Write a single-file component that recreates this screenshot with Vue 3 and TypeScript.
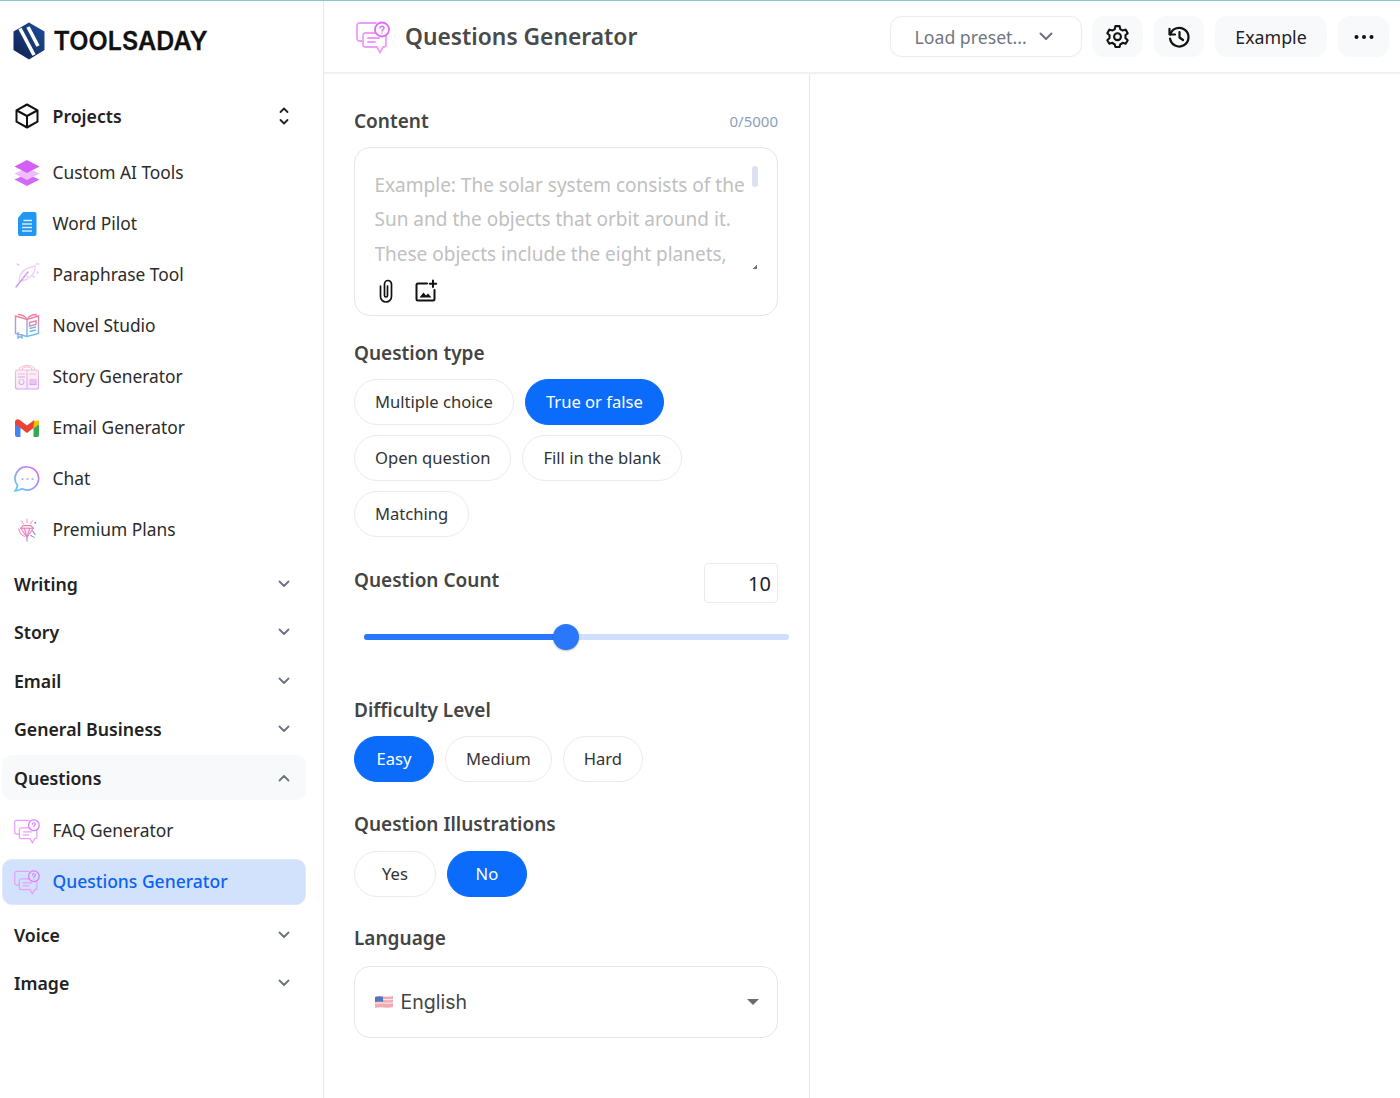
<script setup lang="ts">
const tools = [
  { label: 'Custom AI Tools', icon: 'layers' },
  { label: 'Word Pilot', icon: 'doc' },
  { label: 'Paraphrase Tool', icon: 'feather' },
  { label: 'Novel Studio', icon: 'book' },
  { label: 'Story Generator', icon: 'story' },
  { label: 'Email Generator', icon: 'gmail' },
  { label: 'Chat', icon: 'chat' },
  { label: 'Premium Plans', icon: 'gem' },
]
const sectionsA = ['Writing', 'Story', 'Email', 'General Business']
const sectionsB = ['Voice', 'Image']
const typeRows = [
  [{ t: 'Multiple choice', on: false }, { t: 'True or false', on: true }],
  [{ t: 'Open question', on: false }, { t: 'Fill in the blank', on: false }],
  [{ t: 'Matching', on: false }],
]
const difficulty = [{ t: 'Easy', on: true }, { t: 'Medium', on: false }, { t: 'Hard', on: false }]
const illustrations = [{ t: 'Yes', on: false }, { t: 'No', on: true }]
const subItems = [
  { label: 'FAQ Generator', active: false },
  { label: 'Questions Generator', active: true },
]
</script>

<template>
  <div class="page">
    <div class="topline"></div>
    <div class="shell">
      <aside class="sidebar">
        <div class="brand">
          <svg class="logo" viewBox="0 0 32 38" width="32" height="38">
            <defs>
              <linearGradient id="lg" x1="0" y1="1" x2="1" y2="0">
                <stop offset="0" stop-color="#10204c" />
                <stop offset="1" stop-color="#1d4f9e" />
              </linearGradient>
            </defs>
            <path d="M16 0.5 31.5 9.5V28L16 37.5.5 28V9.500Z" fill="url(#lg)" />
            <path d="M7 6.500 21 33" stroke="#fff" stroke-width="3.600" fill="none" />
            <path d="M15 5 25 24" stroke="#fff" stroke-width="3.600" fill="none" />
          </svg>
          <span class="brand-name">TOOLSADAY</span>
        </div>

        <div class="row projects">
          <svg class="ico" viewBox="0 0 26 26" width="26" height="26" fill="none" stroke="#111" stroke-width="2" stroke-linejoin="round">
            <path d="M13 1.500 23.500 7.300V18.700L13 24.500 2.500 18.700V7.300Z" />
            <path d="M2.800 7.500 13 13 23.200 7.500M13 13V24.200" />
          </svg>
          <span class="projects-label">Projects</span>
          <svg class="updown" viewBox="0 0 12 20" width="12" height="20" fill="none" stroke="#222" stroke-width="1.800" stroke-linecap="round" stroke-linejoin="round">
            <path d="M2.500 6 6 2.500 9.500 6M2.500 14 6 17.500 9.500 14" />
          </svg>
        </div>

        <nav class="tools">
          <a v-for="tool in tools" :key="tool.label" class="row tool">
            <span class="tool-icon">
              <svg v-if="tool.icon === 'layers'" viewBox="0 0 26 26" width="26" height="26">
                <path d="M13 14 25.500 19.500 13 26 .5 19.500Z" fill="#d468f6" />
                <path d="M13 8 25.500 13.500 13 20 .5 13.500Z" fill="#efbcfc" />
                <path d="M13 0 25.500 6.500 13 13 .5 6.500Z" fill="#d45ef6" />
              </svg>
              <svg v-else-if="tool.icon === 'doc'" viewBox="0 0 20 24" width="20" height="24">
                <path d="M6 0H17.500A2 2 0 0 1 19.500 2V22A2 2 0 0 1 17.500 24H3A2 2 0 0 1 1 22V6Z" fill="#2196f3" />
                <path d="M6.500 8.500H15M5 12H15M5 15.500H15M5 19H15" stroke="#d6edff" stroke-width="1.500" />
              </svg>
              <svg v-else-if="tool.icon === 'feather'" viewBox="0 0 26 26" width="26" height="26" fill="none" stroke-linecap="round">
                <path d="M5 19C5 11 11 6 21 4 22 11 15 18 7 19" stroke="#f0d0f9" stroke-width="1.300" />
                <path d="M2 25 14 10" stroke="#c39af3" stroke-width="1.400" />
                <path d="M8 15 10 18M11 12 14 15" stroke="#f5cbea" stroke-width="1.100" />
                <path d="M3 2 5 3M22 2 25 2M23 10 24 11M19 14 20 15" stroke="#e9b6ef" stroke-width="1.200" />
              </svg>
              <svg v-else-if="tool.icon === 'book'" viewBox="0 0 26 26" width="26" height="26" fill="none" stroke="url(#bookg)" stroke-width="1.400">
                <defs>
                  <linearGradient id="bookg" x1="0" y1="0" x2="0" y2="1">
                    <stop offset="0" stop-color="#f97f9f" />
                    <stop offset="1" stop-color="#5fc0f7" />
                  </linearGradient>
                </defs>
                <path d="M1.500 3V20.500L13 23.500 24.500 20.500V3L13 6.500Z" />
                <path d="M4 1.500C8 1.500 11 3 13 6.500 15 3 18 1.500 22 1.500V3M13 6.500V23.500" />
                <path d="M15.500 9.500 22 8V11.500L15.500 13ZM15.500 15.500 22 14M15.500 18.500 22 17" />
                <path d="M4 19V25L6 23.500 8 25V21" />
              </svg>
              <svg v-else-if="tool.icon === 'story'" viewBox="0 0 26 26" width="26" height="26" fill="none" stroke="url(#storyg)" stroke-width="1.100">
                <defs>
                  <linearGradient id="storyg" x1="0" y1="0" x2="0" y2="1">
                    <stop offset="0" stop-color="#f7bfcd" />
                    <stop offset="1" stop-color="#d3a6f8" />
                  </linearGradient>
                </defs>
                <path d="M1.500 8A2 2 0 0 1 3.500 6H22.500A2 2 0 0 1 24.500 8V23A2 2 0 0 1 22.500 25H3.500A2 2 0 0 1 1.500 23Z" fill="#f8edf9" />
                <path d="M13 6V25M5 6C5 0 21 0 21 6M8 6C8 2 18 2 18 6" />
                <circle cx="7.500" cy="18" r="2.500" />
                <rect x="16" y="15.500" width="6" height="5" fill="#e5c8f7" />
                <path d="M4 10H11M15 10H22M4 13H11" />
              </svg>
              <svg v-else-if="tool.icon === 'gmail'" viewBox="0 0 24 18" width="24" height="18">
                <path d="M0 3.500V16A2 2 0 0 0 2 18H5.500V8Z" fill="#4285f4" />
                <path d="M24 3.500V16A2 2 0 0 1 22 18H18.500V8Z" fill="#34a853" />
                <path d="M18.500 2 24 1.500V5.500L18.500 9.500Z" fill="#fbbc04" />
                <path d="M0 5.500V3C0 .5 2.800-.6 4.800 1L12 6.500 19.200 1 18.500 9 12 14 5.500 9Z" fill="#ea4335" />
              </svg>
              <svg v-else-if="tool.icon === 'chat'" viewBox="0 0 26 26" width="26" height="26" fill="none">
                <defs>
                  <linearGradient id="chatg" x1="0" y1="1" x2="1" y2="0">
                    <stop offset="0" stop-color="#5ccff8" />
                    <stop offset="1" stop-color="#e860f6" />
                  </linearGradient>
                </defs>
                <path d="M13.500 1A11.500 11.500 0 1 1 8 22.800C6 24 3.500 24.800 1 24.800 2.500 23 3.200 21.500 3.500 19.500A11.500 11.500 0 0 1 13.500 1Z" stroke="url(#chatg)" stroke-width="1.700" />
                <g fill="#a3b2f8"><circle cx="8.500" cy="13" r="1.100" /><circle cx="13.500" cy="13" r="1.100" /><circle cx="18.500" cy="13" r="1.100" /></g>
              </svg>
              <svg v-else viewBox="0 0 24 26" width="22" height="24" fill="none" stroke-width="1.100" stroke-linecap="round">
                <path d="M5 11 8 8H16L19 11 12 21Z" stroke="#ee7ab0" fill="#fde6f1" />
                <path d="M5 11H19M9 11 12 21 15 11" stroke="#e37cc4" />
                <path d="M6 3 8 6M12 1V5M18 3 16 6" stroke="#f09ac0" />
                <path d="M12 22 12 25M18 14 21 18M16 19 20 21" stroke="#7d8fe0" />
                <path d="M3 12 5 17 9 20" stroke="#e88ac4" />
                <circle cx="21" cy="5" r="1.100" fill="#8f83d8" />
              </svg>
            </span>
            <span class="tool-label">{{ tool.label }}</span>
          </a>
        </nav>

        <div class="sections">
          <div v-for="s in sectionsA" :key="s" class="row section">
            <span>{{ s }}</span>
            <svg class="chev" viewBox="0 0 12 8" width="12" height="8" fill="none" stroke="#6b7280" stroke-width="1.800" stroke-linecap="round" stroke-linejoin="round"><path d="M1.500 1.500 6 6 10.500 1.500" /></svg>
          </div>
          <div class="row section open">
            <span>Questions</span>
            <svg class="chev" viewBox="0 0 12 8" width="12" height="8" fill="none" stroke="#6b7280" stroke-width="1.800" stroke-linecap="round" stroke-linejoin="round"><path d="M1.500 6.500 6 2 10.500 6.500" /></svg>
          </div>
        </div>

        <div class="sub">
          <a v-for="item in subItems" :key="item.label" class="row tool subitem" :class="{ active: item.active }">
            <span class="tool-icon">
              <svg viewBox="0 0 34 34" width="26" height="26" fill="none" stroke="#e99efb" stroke-width="1.600" stroke-linejoin="round" stroke-linecap="round">
                <path d="M20 3H3.500A2.500 2.500 0 0 0 1 5.500V18.500A2.500 2.500 0 0 0 3.500 21H7" />
                <path d="M9.500 13H27.500A2.500 2.500 0 0 1 30 15.500V24.500A2.500 2.500 0 0 1 27.500 27H27L24 32.500 21 27H9.500A2.500 2.500 0 0 1 7 24.500V15.500A2.500 2.500 0 0 1 9.500 13Z" />
                <circle cx="26" cy="9.500" r="7" :fill="item.active ? '#d2e2fc' : '#fff'" stroke="#dc7cf9" />
                <path d="M24 8C24 5.500 28 5.500 28 8 28 9.500 26 9.500 26 11M26 13V13.100" stroke="#dc7cf9" stroke-width="1.400" />
                <path d="M12 18H23M12 22H19" />
              </svg>
            </span>
            <span class="tool-label">{{ item.label }}</span>
          </a>
        </div>

        <div class="sections last">
          <div v-for="s in sectionsB" :key="s" class="row section">
            <span>{{ s }}</span>
            <svg class="chev" viewBox="0 0 12 8" width="12" height="8" fill="none" stroke="#6b7280" stroke-width="1.800" stroke-linecap="round" stroke-linejoin="round"><path d="M1.500 1.500 6 6 10.500 1.500" /></svg>
          </div>
        </div>
      </aside>

      <main class="main">
        <header class="header">
          <div class="title-wrap">
            <svg viewBox="0 0 34 34" width="34" height="34" fill="none" stroke="#ef9dfd" stroke-width="1.800" stroke-linejoin="round" stroke-linecap="round">
              <path d="M20 3H3.500A2.500 2.500 0 0 0 1 5.500V18.500A2.500 2.500 0 0 0 3.500 21H7" />
              <path d="M9.500 13H27.500A2.500 2.500 0 0 1 30 15.500V24.500A2.500 2.500 0 0 1 27.500 27H27L24 32.500 21 27H9.500A2.500 2.500 0 0 1 7 24.500V15.500A2.500 2.500 0 0 1 9.500 13Z" />
              <circle cx="26" cy="9.500" r="7" fill="#fff" stroke="#db70f9" />
              <path d="M24 8C24 5.500 28 5.500 28 8 28 9.500 26 9.500 26 11M26 13V13.100" stroke="#db70f9" stroke-width="1.500" />
              <path d="M12 18H23M12 22H19" />
            </svg>
            <h1 class="title">Questions Generator</h1>
          </div>
          <div class="actions">
            <div class="preset">
              <span>Load preset...</span>
              <svg viewBox="0 0 14 9" width="14" height="9" fill="none" stroke="#6b7280" stroke-width="2" stroke-linecap="round" stroke-linejoin="round"><path d="M1.500 1.500 7 7 12.500 1.500" /></svg>
            </div>
            <button class="act square">
              <svg viewBox="0 0 24 24" width="25" height="25" fill="none" stroke="#111" stroke-width="2" stroke-linejoin="round">
                <path d="M10 2H14L14.700 5A7.500 7.500 0 0 1 16.900 6.300L19.800 5.400 21.800 8.800 19.600 10.900A7.500 7.500 0 0 1 19.600 13.500L21.800 15.600 19.800 19 16.900 18.100A7.500 7.500 0 0 1 14.700 19.400L14 22H10L9.300 19.400A7.500 7.500 0 0 1 7.100 18.100L4.200 19 2.200 15.600 4.400 13.500A7.500 7.500 0 0 1 4.400 10.900L2.200 8.800 4.200 5.400 7.100 6.300A7.500 7.500 0 0 1 9.300 5Z" />
                <circle cx="12" cy="12.200" r="3.300" />
              </svg>
            </button>
            <button class="act square hist">
              <svg viewBox="0 0 24 24" width="24" height="24" fill="none" stroke="#111" stroke-width="2.200" stroke-linecap="round" stroke-linejoin="round">
                <path d="M3.300 9.500A9.300 9.300 0 1 1 3 13.500" />
                <path d="M2.500 3.800V9.500H8" />
                <path d="M12.500 7V12.500L16 15" />
              </svg>
            </button>
            <button class="act example">Example</button>
            <button class="act square">
              <svg viewBox="0 0 20 4" width="20" height="4" fill="#111"><circle cx="2.500" cy="2" r="2" /><circle cx="10" cy="2" r="2" /><circle cx="17.500" cy="2" r="2" /></svg>
            </button>
          </div>
        </header>

        <div class="content">
          <section class="form">
            <div class="label-row first">
              <label class="label">Content</label>
              <span class="count">0/5000</span>
            </div>
            <div class="textarea">
              <p class="placeholder">Example: The solar system consists of the Sun and the objects that orbit around it. These objects include the eight planets,</p>
              <i class="scroll"></i>
              <i class="grip"></i>
              <div class="attach">
                <svg viewBox="0 0 16 24" width="16" height="24" fill="none" stroke="#111" stroke-width="1.700" stroke-linecap="round">
                  <path d="M2.500 7V17.500A5.500 5.500 0 0 0 13.500 17.500V5A3.500 3.500 0 0 0 6.500 5V16.500A1.500 1.500 0 0 0 9.500 16.500V7" />
                </svg>
                <svg viewBox="0 0 24 24" width="24" height="24" fill="none" stroke="#111" stroke-width="2" stroke-linecap="round">
                  <path d="M13 4.500H4A1.500 1.500 0 0 0 2.500 6V20A1.500 1.500 0 0 0 4 21.500H19A1.500 1.500 0 0 0 20.500 20V11" />
                  <path d="M19 1.500V8M15.800 4.700H22.200" />
                  <path d="M5.500 18.500 9.500 13.500 12 16.500 14 14.500 17.500 18.500Z" fill="#111" stroke="none" />
                </svg>
              </div>
            </div>

            <label class="label block qtype">Question type</label>
            <div class="pills">
              <div v-for="(r, i) in typeRows" :key="i" class="pill-row">
                <span v-for="p in r" :key="p.t" class="pill" :class="{ on: p.on }">{{ p.t }}</span>
              </div>
            </div>

            <div class="label-row count-row">
              <label class="label count-label">Question Count</label>
              <div class="num">10</div>
            </div>
            <div class="slider">
              <i class="track"></i>
              <i class="fill"></i>
              <i class="thumb"></i>
            </div>

            <label class="label block diff">Difficulty Level</label>
            <div class="pill-row">
              <span v-for="p in difficulty" :key="p.t" class="pill" :class="{ on: p.on }">{{ p.t }}</span>
            </div>

            <label class="label block ill">Question Illustrations</label>
            <div class="pill-row">
              <span v-for="p in illustrations" :key="p.t" class="pill yn" :class="{ on: p.on }">{{ p.t }}</span>
            </div>

            <label class="label block langl">Language</label>
            <div class="select">
              <svg viewBox="0 0 18 14" width="18" height="14">
                <path d="M0 2C6 0 12 3 18 1V12C12 14 6 11 0 13Z" fill="#f2a9b2" />
                <path d="M0 5C6 3 12 6 18 4M0 8.500C6 6.500 12 9.500 18 7.500" stroke="#fbe6e8" stroke-width="1.200" fill="none" />
                <path d="M0 2C3 1 5 1 8 1.700V7C5 6.300 3 6.300 0 7Z" fill="#5277c2" />
              </svg>
              <span class="lang">English</span>
              <svg class="caret" viewBox="0 0 12 6" width="12" height="6"><path d="M0 0H12L6 6Z" fill="#6b6b6b" /></svg>
            </div>
          </section>
          <section class="output"></section>
        </div>
      </main>
    </div>
  </div>
</template>

<style>
html, body { margin: 0; background: #fff; }
</style>

<style scoped>
* { box-sizing: border-box; }
.page {
  width: 1400px;
  height: 1098px;
  overflow: hidden;
  background: #fff;
  font-family: "Noto Sans", "Open Sans", sans-serif;
  color: #222;
  display: flex;
  flex-direction: column;
}
.topline { height: 1px; background: #8cc4d8; flex: none; }
.shell { flex: 1; display: flex; min-height: 0; }

.sidebar {
  width: 324px;
  flex: none;
  border-right: 1px solid #e7e7e9;
  padding: 0 17px 0 1.500px;
}
.brand { height: 85px; display: flex; align-items: center; padding: 0 0 5px 11px; gap: 9px; }
.logo { flex: none; }
.brand-name {
  font-family: "Inter", sans-serif;
  font-size: 25px;
  font-weight: 600;
  color: #111;
  letter-spacing: 0.05px;
  -webkit-text-stroke: 0.3px #111;
}
.row { display: flex; align-items: center; }
.projects { height: 60px; padding: 0 16px 0 12px; }
.projects-label { font-size: 17.700px; font-weight: 600; color: #222; margin-left: 13px; flex: 1; }

.tools { display: flex; flex-direction: column; margin-top: 1px; }
.tool { height: 51px; padding-left: 12px; font-size: 17.350px; color: #2b2b2b; }
.tool-icon { width: 26px; height: 26px; display: flex; align-items: center; justify-content: center; flex: none; margin-right: 13px; }
.tool-label { line-height: 1; }

.sections { display: flex; flex-direction: column; margin-top: 6px; }
.section {
  height: 45px;
  margin-bottom: 3.500px;
  justify-content: space-between;
  padding: 0 16px 0 12.500px;
  border-radius: 10px;
  font-size: 17.700px;
  font-weight: 600;
  color: #222;
}
.section.open { background: #f8f9fb; margin-bottom: 0; }
.sub { display: flex; flex-direction: column; padding-top: 8px; gap: 5px; }
.subitem { height: 46px; border-radius: 10px; }
.active { background: #d2e2fc; color: #0b63f3; font-weight: 500; border: 1px solid #dfe9fb; padding-left: 11px; font-size: 17.500px; }
.sections.last { margin-top: 7px; }

.main { flex: 1; display: flex; flex-direction: column; min-width: 0; }
.header {
  height: 73px;
  flex: none;
  border-bottom: 2px solid #f1f1f2;
  display: flex;
  align-items: center;
  justify-content: space-between;
  padding: 0 0 0 32px;
}
.title-wrap { display: flex; align-items: center; gap: 15px; }
.title { margin: 0; font-size: 22.800px; font-weight: 600; color: #4a4a4a; }
.actions { display: flex; align-items: center; gap: 11px; padding-right: 11px; }
.preset {
  width: 192px;
  height: 41px;
  margin-right: -1px;
  border: 1.500px solid #ececee;
  border-radius: 12px;
  display: flex;
  align-items: center;
  justify-content: space-between;
  padding: 0 28px 0 23.500px;
  font-size: 17.700px;
  color: #6f7680;
  box-shadow: 0 0 1px rgba(0, 0, 0, .08);
}
.act {
  height: 41px;
  border: none;
  border-radius: 12px;
  background: #f8f9fa;
  display: flex;
  align-items: center;
  justify-content: center;
  font-family: inherit;
  font-size: 17.800px;
  color: #222;
  padding: 0;
}
.square { width: 51px; }
.hist { width: 50px; }
.example { width: 112px; }

.content { flex: 1; display: flex; min-height: 0; }
.form { width: 486px; flex: none; border-right: 1px solid #e7e7e9; padding: 0 31px 0 30px; }
.output { flex: 1; }

.label { font-size: 19px; font-weight: 600; color: #444; line-height: 28px; display: block; }
.label-row { display: flex; justify-content: space-between; align-items: center; }
.first { padding-top: 21px; height: 73px; }
.count { font-size: 15px; color: #8ea0b8; }
.textarea {
  position: relative;
  height: 168.500px;
  border: 1.500px solid #e6e6e8;
  border-radius: 16px;
  padding: 19.500px 30px 0 19.500px;
}
.placeholder { margin: 0; font-size: 19px; line-height: 34.500px; color: #c0c0c0; height: 104px; overflow: hidden; }
.scroll { position: absolute; right: 19px; top: 18px; width: 6px; height: 21px; border-radius: 3px; background: #dfe1ee; }
.grip { position: absolute; right: 20px; top: 117px; width: 4px; height: 4px; background: linear-gradient(135deg, transparent 50%, #777 50%); }
.attach { display: flex; align-items: center; gap: 20px; padding-left: 3px; margin-top: 7px; }

.block { margin-top: 23px; }
.qtype { margin-top: 23.500px; }
.pills { margin-top: 12px; display: flex; flex-direction: column; gap: 10px; }
.pill-row { display: flex; gap: 11px; }
.pill {
  height: 46px;
  min-width: 80px;
  padding: 0 20px 2px;
  border: 1.500px solid #ebebed;
  border-radius: 23px;
  display: flex;
  align-items: center;
  justify-content: center;
  font-size: 16.600px;
  color: #333;
  background: #fff;
}
.pill.on { background: #0b6bfb; border-color: #0b6bfb; color: #fff; }
.yn { padding: 0 27px 2px; }

.count-row { margin-top: 26px; height: 41px; align-items: flex-start; }
.count-label { margin-top: 3px; }
.num {
  width: 74px;
  height: 40px;
  border: 1.500px solid #ebebed;
  border-radius: 4px;
  font-size: 20px;
  color: #222;
  text-align: right;
  padding: 6px 6px 0 0;
}
.slider { position: relative; height: 34px; margin-top: 16px; }
.track { position: absolute; left: 10px; right: -11px; top: 14px; height: 6px; border-radius: 3px; background: #cfe0fe; }
.fill { position: absolute; left: 10px; width: 201px; top: 14px; height: 6px; border-radius: 3px; background: #2a77fb; }
.thumb { position: absolute; left: 198.500px; top: 4px; width: 26px; height: 26px; border-radius: 50%; background: #2a77fb; box-shadow: 0 1px 2px rgba(0, 0, 0, .25); }

.diff { margin-top: 42px; margin-bottom: 12px; }
.ill { margin-top: 28px; margin-bottom: 13px; }
.langl { margin-top: 27px; margin-bottom: 14px; }
.select {
  height: 72px;
  border: 1.500px solid #e6e6e8;
  border-radius: 16px;
  display: flex;
  align-items: center;
  padding: 0 18px 0 19.500px;
  gap: 8px;
}
.lang { flex: 1; font-family: "Inter", sans-serif; font-size: 19.500px; color: #444; }
</style>
